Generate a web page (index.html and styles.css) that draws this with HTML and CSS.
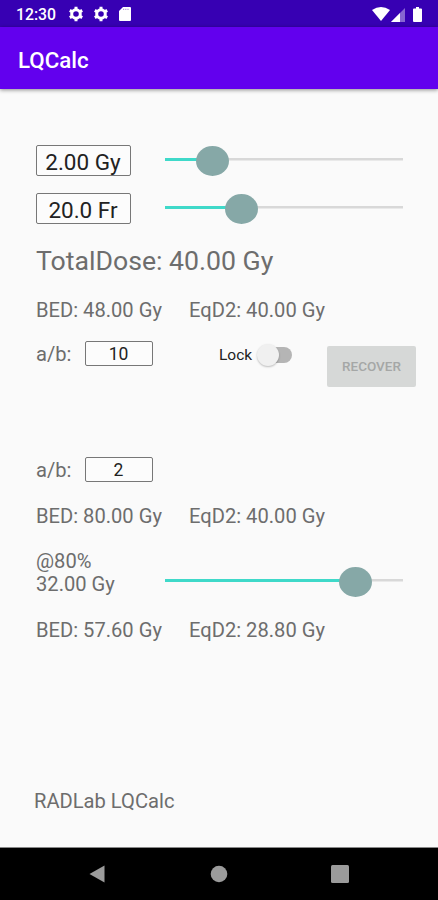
FILE: index.html
```html
<!DOCTYPE html>
<html lang="en">
<head>
<meta charset="utf-8">
<title>LQCalc</title>
<link rel="stylesheet" href="styles.css">
</head>
<body>
<div class="phone">
  <div class="status">
    <span class="clock">12:30</span>
    <svg class="gear" viewBox="0 0 16 16"><circle cx="8" cy="8" r="4.300"/><path d="M8 .8v3M8 12.200v3M1.800 4.400l2.600 1.500M11.600 10.100l2.600 1.500M1.800 11.600l2.600-1.500M11.600 5.900l2.600-1.500"/></svg>
    <svg class="gear" viewBox="0 0 16 16"><circle cx="8" cy="8" r="4.300"/><path d="M8 .8v3M8 12.200v3M1.800 4.400l2.600 1.500M11.600 10.100l2.600 1.500M1.800 11.600l2.600-1.500M11.600 5.900l2.600-1.500"/></svg>
    <svg class="card" viewBox="0 0 12 14"><path d="M4 0h7q1 0 1 1v12q0 1-1 1H1q-1 0-1-1V4z"/><path class="slots" d="M4 2.300h6"/></svg>
    <svg class="wifi" viewBox="0 0 18 14"><path d="M0 3Q9-3 18 3L9 14z"/></svg>
    <svg class="signal" viewBox="0 0 14 14"><path class="faint" d="M14 0v14H0z"/><path d="M9 5v9H0z"/></svg>
    <svg class="battery" viewBox="0 0 9 15"><path d="M3 0h3v1.500h2q1 0 1 1V14q0 1-1 1H1q-1 0-1-1V2.500q0-1 1-1h2z"/></svg>
  </div>
  <header class="appbar"><h1>LQCalc</h1></header>
  <main class="content">
    <div class="row dose">
      <div class="field">2.00 Gy</div>
      <div class="slider"><span class="fill" style="width:47px"></span><span class="thumb"></span></div>
    </div>
    <div class="row fractions">
      <div class="field">20.0 Fr</div>
      <div class="slider"><span class="fill" style="width:76px"></span><span class="thumb"></span></div>
    </div>
    <div class="total">TotalDose: 40.00 Gy</div>
    <div class="row results"><span class="bed">BED: 48.00 Gy</span><span>EqD2: 40.00 Gy</span></div>
    <div class="row ratio">
      <span class="label">a/b:</span><div class="field small">10</div>
      <span class="lock">Lock</span><span class="switch"><span class="knob"></span></span>
      <button class="recover" disabled>RECOVER</button>
    </div>
    <div class="row ratio second"><span class="label">a/b:</span><div class="field small">2</div></div>
    <div class="row results after-ratio"><span class="bed">BED: 80.00 Gy</span><span>EqD2: 40.00 Gy</span></div>
    <div class="row percent">
      <div class="percent-text">@80%<br>32.00 Gy</div>
      <div class="slider"><span class="fill" style="width:190px"></span><span class="thumb"></span></div>
    </div>
    <div class="row results last"><span class="bed">BED: 57.60 Gy</span><span>EqD2: 28.80 Gy</span></div>
    <footer>RADLab LQCalc</footer>
  </main>
  <nav class="navbar">
    <svg class="back" viewBox="0 0 16 18"><path d="M15.500.5v17L.5 9z"/></svg>
    <svg class="home" viewBox="0 0 18 18"><circle cx="9" cy="9" r="8.300"/></svg>
    <svg class="recent" viewBox="0 0 18 18"><rect width="18" height="18" rx="1.500"/></svg>
  </nav>
</div>
</body>
</html>
```
FILE: styles.css
```css
* { box-sizing: border-box; }
body { margin: 0; background: #fafafa; font-family: Roboto, sans-serif; color: #6d6d6d; }
svg { display: block; flex: none; }
.phone { width: 438px; height: 900px; display: flex; flex-direction: column; overflow: hidden; }

.status { height: 27px; flex: none; display: flex; align-items: center; padding: 1px 16px 0 16px; background: #3700b3; color: #fff; }
.status svg { fill: #fff; }
.clock { width: 52px; font-size: 15.800px; font-weight: 500; line-height: 27px; }
.status .gear { width: 16px; height: 16px; margin-right: 9px; fill: none; stroke: #fff; stroke-width: 3; }
.card { width: 12px; height: 14px; margin-left: 1px; }
.slots { stroke: #b49ae0; stroke-width: 1.2; stroke-dasharray: 1.2 1; }
.wifi { width: 18px; height: 14px; margin-left: auto; }
.signal { width: 14px; height: 14px; margin: 1px 8px 0 1px; }
.signal .faint { opacity: .4; }
.battery { width: 9px; height: 15px; }

.appbar { height: 62px; flex: none; display: flex; align-items: center; padding: 4px 0 0 18px; background: #6200ee; box-shadow: 0 1px 4px rgba(0, 0, 0, .45); }
h1 { margin: 0; font-size: 22.300px; font-weight: 500; line-height: 26px; color: #fff; }

.content { flex: 1; padding: 56px 0 0 36px; font-size: 20.150px; line-height: 24px; }
.row { display: flex; }
.field { width: 95px; height: 31px; border: 1.500px solid #777; border-radius: 2px; background: #fcfcfc; color: #222; font-size: 22.500px; line-height: 32px; text-align: center; text-indent: -1px; }
.slider { width: 238px; height: 30px; margin-left: auto; margin-right: 35px; display: flex; align-items: center; background: linear-gradient(#d8d8d8, #d8d8d8) 0 13px / 100% 2.500px no-repeat; }
.dose .slider, .fractions .slider { margin-top: 0; }
.fill { height: 2.500px; background: #3fd9c9; margin-top: -1.500px; }
.thumb { width: 33px; height: 30px; margin-left: -16px; border-radius: 50%; background: #86a8a7; position: relative; top: .5px; }
.fractions { margin-top: 17px; }
.total { margin-top: 20px; font-size: 26.650px; line-height: 34px; }
.results { height: 24px; margin-top: 20px; }
.bed { width: 153px; }

.ratio { height: 46px; margin-top: 19px; align-items: flex-start; }
.label { width: 49px; line-height: 27px; }
.small { width: 68px; height: 25px; font-size: 17.500px; line-height: 25px; }
.lock { margin-left: 66px; font-size: 15.500px; line-height: 29px; color: #222; }
.switch { display: flex; align-items: center; width: 29px; height: 16px; margin: 6px 0 0 11px; border-radius: 8px; background: #b5b5b5; }
.knob { flex: none; width: 22px; height: 22px; margin-left: -6px; border-radius: 50%; background: #f0f0f0; box-shadow: 0 1px 2px rgba(0, 0, 0, .25); }
.recover { width: 89px; height: 41px; margin: 5px 22px 0 auto; padding: 0; border: 0; border-radius: 2px; background: #d6d8d7; color: #a5a7a6; font: 500 13.500px/41px Roboto, sans-serif; }
.second { height: 25px; margin-top: 70px; }
.after-ratio { margin-top: 22px; }
.percent { margin-top: 22px; height: 46px; }
.percent-text { line-height: 23px; }
.percent .slider { margin-top: 16px; }
.last { margin-top: 22px; }
footer { margin: 147px 0 0 -2px; }

.navbar { height: 53px; flex: none; display: flex; padding: 17px 0 0 88px; background: #000; border-top: 1px solid #888; }
.navbar svg { width: 18px; height: 18px; fill: #9b9b9b; }
.home { margin-left: 104px; }
.recent { margin-left: 103px; }
```
